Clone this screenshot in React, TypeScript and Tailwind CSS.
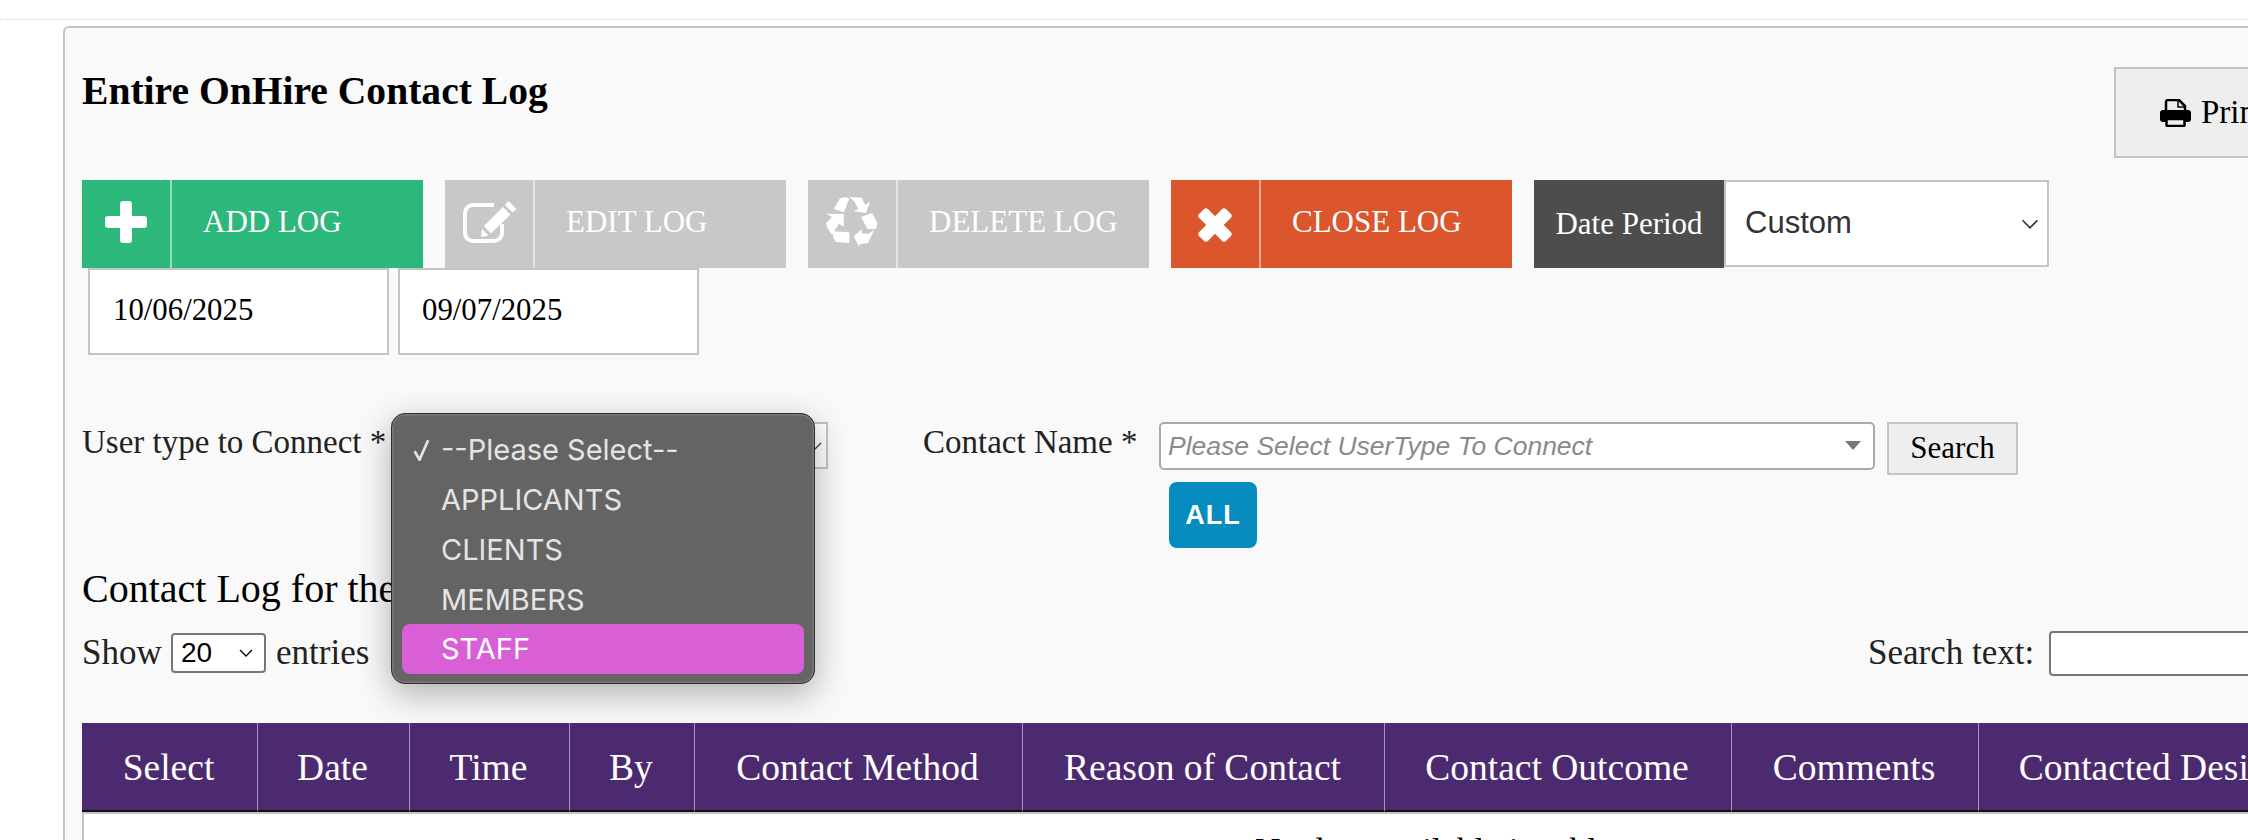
import React from 'react';

const columns = [
  { label: 'Select', width: 'w-[176px]' },
  { label: 'Date', width: 'w-[152px]' },
  { label: 'Time', width: 'w-[160px]' },
  { label: 'By', width: 'w-[125px]' },
  { label: 'Contact Method', width: 'w-[328px]' },
  { label: 'Reason of Contact', width: 'w-[362px]' },
  { label: 'Contact Outcome', width: 'w-[347px]' },
  { label: 'Comments', width: 'w-[247px]' },
  { label: 'Contacted Designation', width: 'w-[425px]' },
];

const options = ['APPLICANTS', 'CLIENTS', 'MEMBERS'];

const ActionButton = ({ label, icon, color }: { label: string; icon: React.ReactNode; color: string }) => (
  <div className={`flex h-[88px] w-[341px] text-white ${color}`}>
    <div className="flex w-[90px] items-center justify-center border-r-2 border-white/50 pb-[5px]">{icon}</div>
    <div className="flex flex-1 items-center pl-[31px] pb-[4px] text-[31px]">{label}</div>
  </div>
);

const ChevronIcon = ({ className }: { className: string }) => (
  <svg viewBox="0 0 14 8" fill="none" stroke="currentColor" strokeWidth={1.3} className={className}>
    <path d="M1 1l6 6 6-6" />
  </svg>
);

const PlusIcon = () => (
  <svg viewBox="0 0 42 42" fill="currentColor" className="h-[42px] w-[42px]">
    <rect x="15" width="12" height="42" rx="3" />
    <rect y="15" width="42" height="12" rx="3" />
  </svg>
);

const EditIcon = () => (
  <svg viewBox="0 0 53 42" fill="currentColor" className="h-[42px] w-[53px]">
    <path d="M31 4H10a8 8 0 0 0-8 8v20a8 8 0 0 0 8 8h21a8 8 0 0 0 8-8v-9" fill="none" stroke="currentColor" strokeWidth={4} />
    <path d="M21 25L40 6l7.5 7.5L28 32.5zM19 28l6.5 6.5L18 36zM42 4l2.5-3a1.5 1.5 0 0 1 2 0l6 6a1.5 1.5 0 0 1 0 2L49.500 11.500z" />
  </svg>
);

const RecycleIcon = () => (
  <svg viewBox="0 0 52 50" fill="currentColor" className="h-[50px] w-[52px]">
    <path d="M7.700 12L14 1.300 20 0l3.300 2-5.600 13.300z" />
    <path d="M23.300 0l12.400.7L39 7.700 44 5l-4 11-12.300-1.700 4.600-2.600L28 4z" />
    <path d="M35 20l11-4 5.500 10-1.500 6h-8.500z" />
    <path d="M48.300 33L42 46l-8 1-1 3-5.300-10.700L36 32l-.5 4 6.500 1z" />
    <path d="M6.700 34.300l16.600 1V46L10 45l-3-5z" />
    <path d="M0 16.700L18 17l-.5 13-4.500-3.500L6 38l-5-8-1-4 6-6z" />
  </svg>
);

const TimesIcon = () => (
  <svg viewBox="0 0 36 36" fill="currentColor" className="mt-[7px] h-[36px] w-[36px]">
    <rect x="-1" y="11.750" width="38" height="12.500" rx="3" transform="rotate(45 18 18)" />
    <rect x="-1" y="11.750" width="38" height="12.500" rx="3" transform="rotate(-45 18 18)" />
  </svg>
);

const PrintIcon = () => (
  <svg viewBox="0 0 31 28" className="h-[28px] w-[31px]">
    <path d="M6 12V3a2 2 0 0 1 2-2h11l6 6v5" fill="none" stroke="currentColor" strokeWidth={2.500} />
    <path d="M18 1v7h7" fill="none" stroke="currentColor" strokeWidth={1.500} />
    <rect y="11" width="31" height="12" rx="3" fill="currentColor" />
    <rect x="6.500" y="20" width="18" height="7" rx="1" fill="#eeeeee" stroke="currentColor" strokeWidth={2.500} />
  </svg>
);

export default function App() {
  return (
    <div className="h-[840px] w-[2248px] overflow-hidden bg-white font-['Liberation_Serif',serif] text-black">
      <div className="mt-[19px] border-t border-dotted border-[#d8d8d8]" />
      <div className="ml-[63px] mt-[6px] h-[900px] w-[2300px] rounded-tl-[6px] border-l-2 border-t-2 border-[#c4c4c4] bg-[#f9f9f9] pl-[17px]">
        {/* Title and print */}
        <div className="flex h-[152px]">
          <h1 className="mt-[38px] w-[2032px] text-[39.600px] font-bold leading-[50px]">Entire OnHire Contact Log</h1>
          <button className="mt-[39px] flex h-[91px] w-[200px] items-center gap-[10px] border-2 border-[#c4c4c4] bg-[#eeeeee] pl-[44px] text-[33px]">
            <PrintIcon />
            Print
          </button>
        </div>

        {/* Action buttons */}
        <div className="flex">
          <div className="flex gap-[22px]">
            <ActionButton label="ADD LOG" color="bg-[#2db87b]" icon={<PlusIcon />} />
            <ActionButton label="EDIT LOG" color="bg-[#c8c8c8]" icon={<EditIcon />} />
            <ActionButton label="DELETE LOG" color="bg-[#c8c8c8]" icon={<RecycleIcon />} />
            <ActionButton label="CLOSE LOG" color="bg-[#db552d]" icon={<TimesIcon />} />
          </div>
          <div className="ml-[22px] flex h-[88px] w-[190px] items-center justify-center bg-[#4d4d4d] text-[31px] text-white">Date Period</div>
          <div className="flex h-[87px] w-[325px] items-center justify-between border-2 border-[#c4c4c4] bg-white pl-[19px] pr-[8px] font-['Liberation_Sans',sans-serif] text-[31px] text-[#333333]">
            Custom
            <ChevronIcon className="h-[10px] w-[18px]" />
          </div>
        </div>

        {/* Date range */}
        <div className="ml-[6px] flex gap-[9px]">
          <div className="flex h-[87px] w-[301px] items-center border-2 border-[#c4c4c4] bg-white pb-[2px] pl-[23px] text-[30.800px]">10/06/2025</div>
          <div className="flex h-[87px] w-[301px] items-center border-2 border-[#c4c4c4] bg-white pb-[2px] pl-[22px] text-[30.800px]">09/07/2025</div>
        </div>

        {/* Connect form */}
        <div className="mt-[67px] flex items-start">
          <label className="mt-[1px] w-[309px] text-[33px] leading-[38px] text-[#222222]">User type to Connect *</label>
          <div className="relative flex h-[47px] w-[437px] items-center justify-end border-2 border-[#c4c4c4] bg-white pr-[4px] text-[#444444]">
            <ChevronIcon className="h-[8px] w-[14px]" />
            <div className="absolute left-[-2px] top-[-11px] z-10 flex h-[271px] w-[424px] flex-col rounded-[14px] border border-[#2e2e2e] bg-[#646464] px-[10px] pt-[11px] font-['Inter',sans-serif] text-[29px] text-[#e4e4e4] shadow-[0_10px_34px_rgba(0,0,0,0.3),inset_0_0_0_1.5px_rgba(255,255,255,0.14)]">
              <div className="relative flex h-[50px] items-center pl-[39px]">
                <svg viewBox="0 0 18 18" fill="none" stroke="currentColor" strokeWidth={2.200} className="absolute left-[9px] h-[22px] w-[22px]">
                  <path d="M3 10l4 7 7-16" />
                </svg>
                --Please Select--
              </div>
              {options.map((option) => (
                <div key={option} className="flex h-[50px] items-center pl-[39px]">{option}</div>
              ))}
              <div className="-mt-px flex h-[50px] items-center rounded-[8px] bg-[#d95fd6] pl-[39px] text-white">STAFF</div>
            </div>
          </div>
          <label className="ml-[95px] mt-[1px] w-[236px] text-[33px] leading-[38px] text-[#222222]">Contact Name *</label>
          <div className="flex flex-col">
            <div className="flex items-start">
              <div className="flex h-[48px] w-[716px] items-center justify-between rounded-[5px] border-2 border-[#aaaaaa] bg-white pl-[7px] pr-[12px] pt-[2px] font-['Liberation_Sans',sans-serif] text-[26.500px] italic text-[#8a8a8a]">
                Please Select UserType To Connect
                <span className="mb-[3px] h-0 w-0 border-x-[8px] border-t-[9px] border-x-transparent border-t-[#777777]" />
              </div>
              <button className="ml-[12px] h-[53px] w-[131px] border-2 border-[#c4c4c4] bg-[#eeeeee] text-[31px]">Search</button>
            </div>
            <div className="ml-[10px] mt-[7px] flex h-[66px] w-[88px] items-center justify-center rounded-[8px] bg-[#068bbf] font-['Liberation_Sans',sans-serif] text-[27px] font-bold tracking-[1px] text-white">ALL</div>
          </div>
        </div>

        {/* Table heading */}
        <h2 className="mt-[18px] text-[40px] leading-[46px]">Contact Log for the Period</h2>
        <div className="mt-[18px] flex h-[46px] items-center">
          <span className="w-[89px] text-[35px] text-[#222222]">Show</span>
          <div className="flex h-[40px] w-[95px] items-center justify-between rounded-[4px] border-2 border-[#777777] bg-white pl-[8px] pr-[10px] font-['Liberation_Sans',sans-serif] text-[28px]">
            20
            <ChevronIcon className="h-[8px] w-[16px]" />
          </div>
          <span className="ml-[10px] w-[1592px] text-[35px] text-[#222222]">entries</span>
          <span className="w-[181px] text-[35px] text-[#222222]">Search text:</span>
          <div className="h-[45px] w-[300px] rounded-[4px] border-2 border-[#777777] bg-white" />
        </div>

        {/* Table */}
        <div className="mt-[47px] flex w-[2322px] bg-[#4c2a70] text-[37.500px] text-white">
          {columns.map((col) => (
            <div key={col.label} className={`flex h-[89px] items-center justify-center whitespace-nowrap border-b-2 border-r border-b-[#111111] border-r-white/50 pr-[2px] pt-[3px] ${col.width}`}>
              {col.label}
            </div>
          ))}
        </div>
        <div className="h-[60px] w-[2322px] border-l-2 border-t-2 border-[#c4c4c4] bg-white pl-[1171px] pt-[12px] text-[35px]">No data available in table</div>
      </div>
    </div>
  );
}
